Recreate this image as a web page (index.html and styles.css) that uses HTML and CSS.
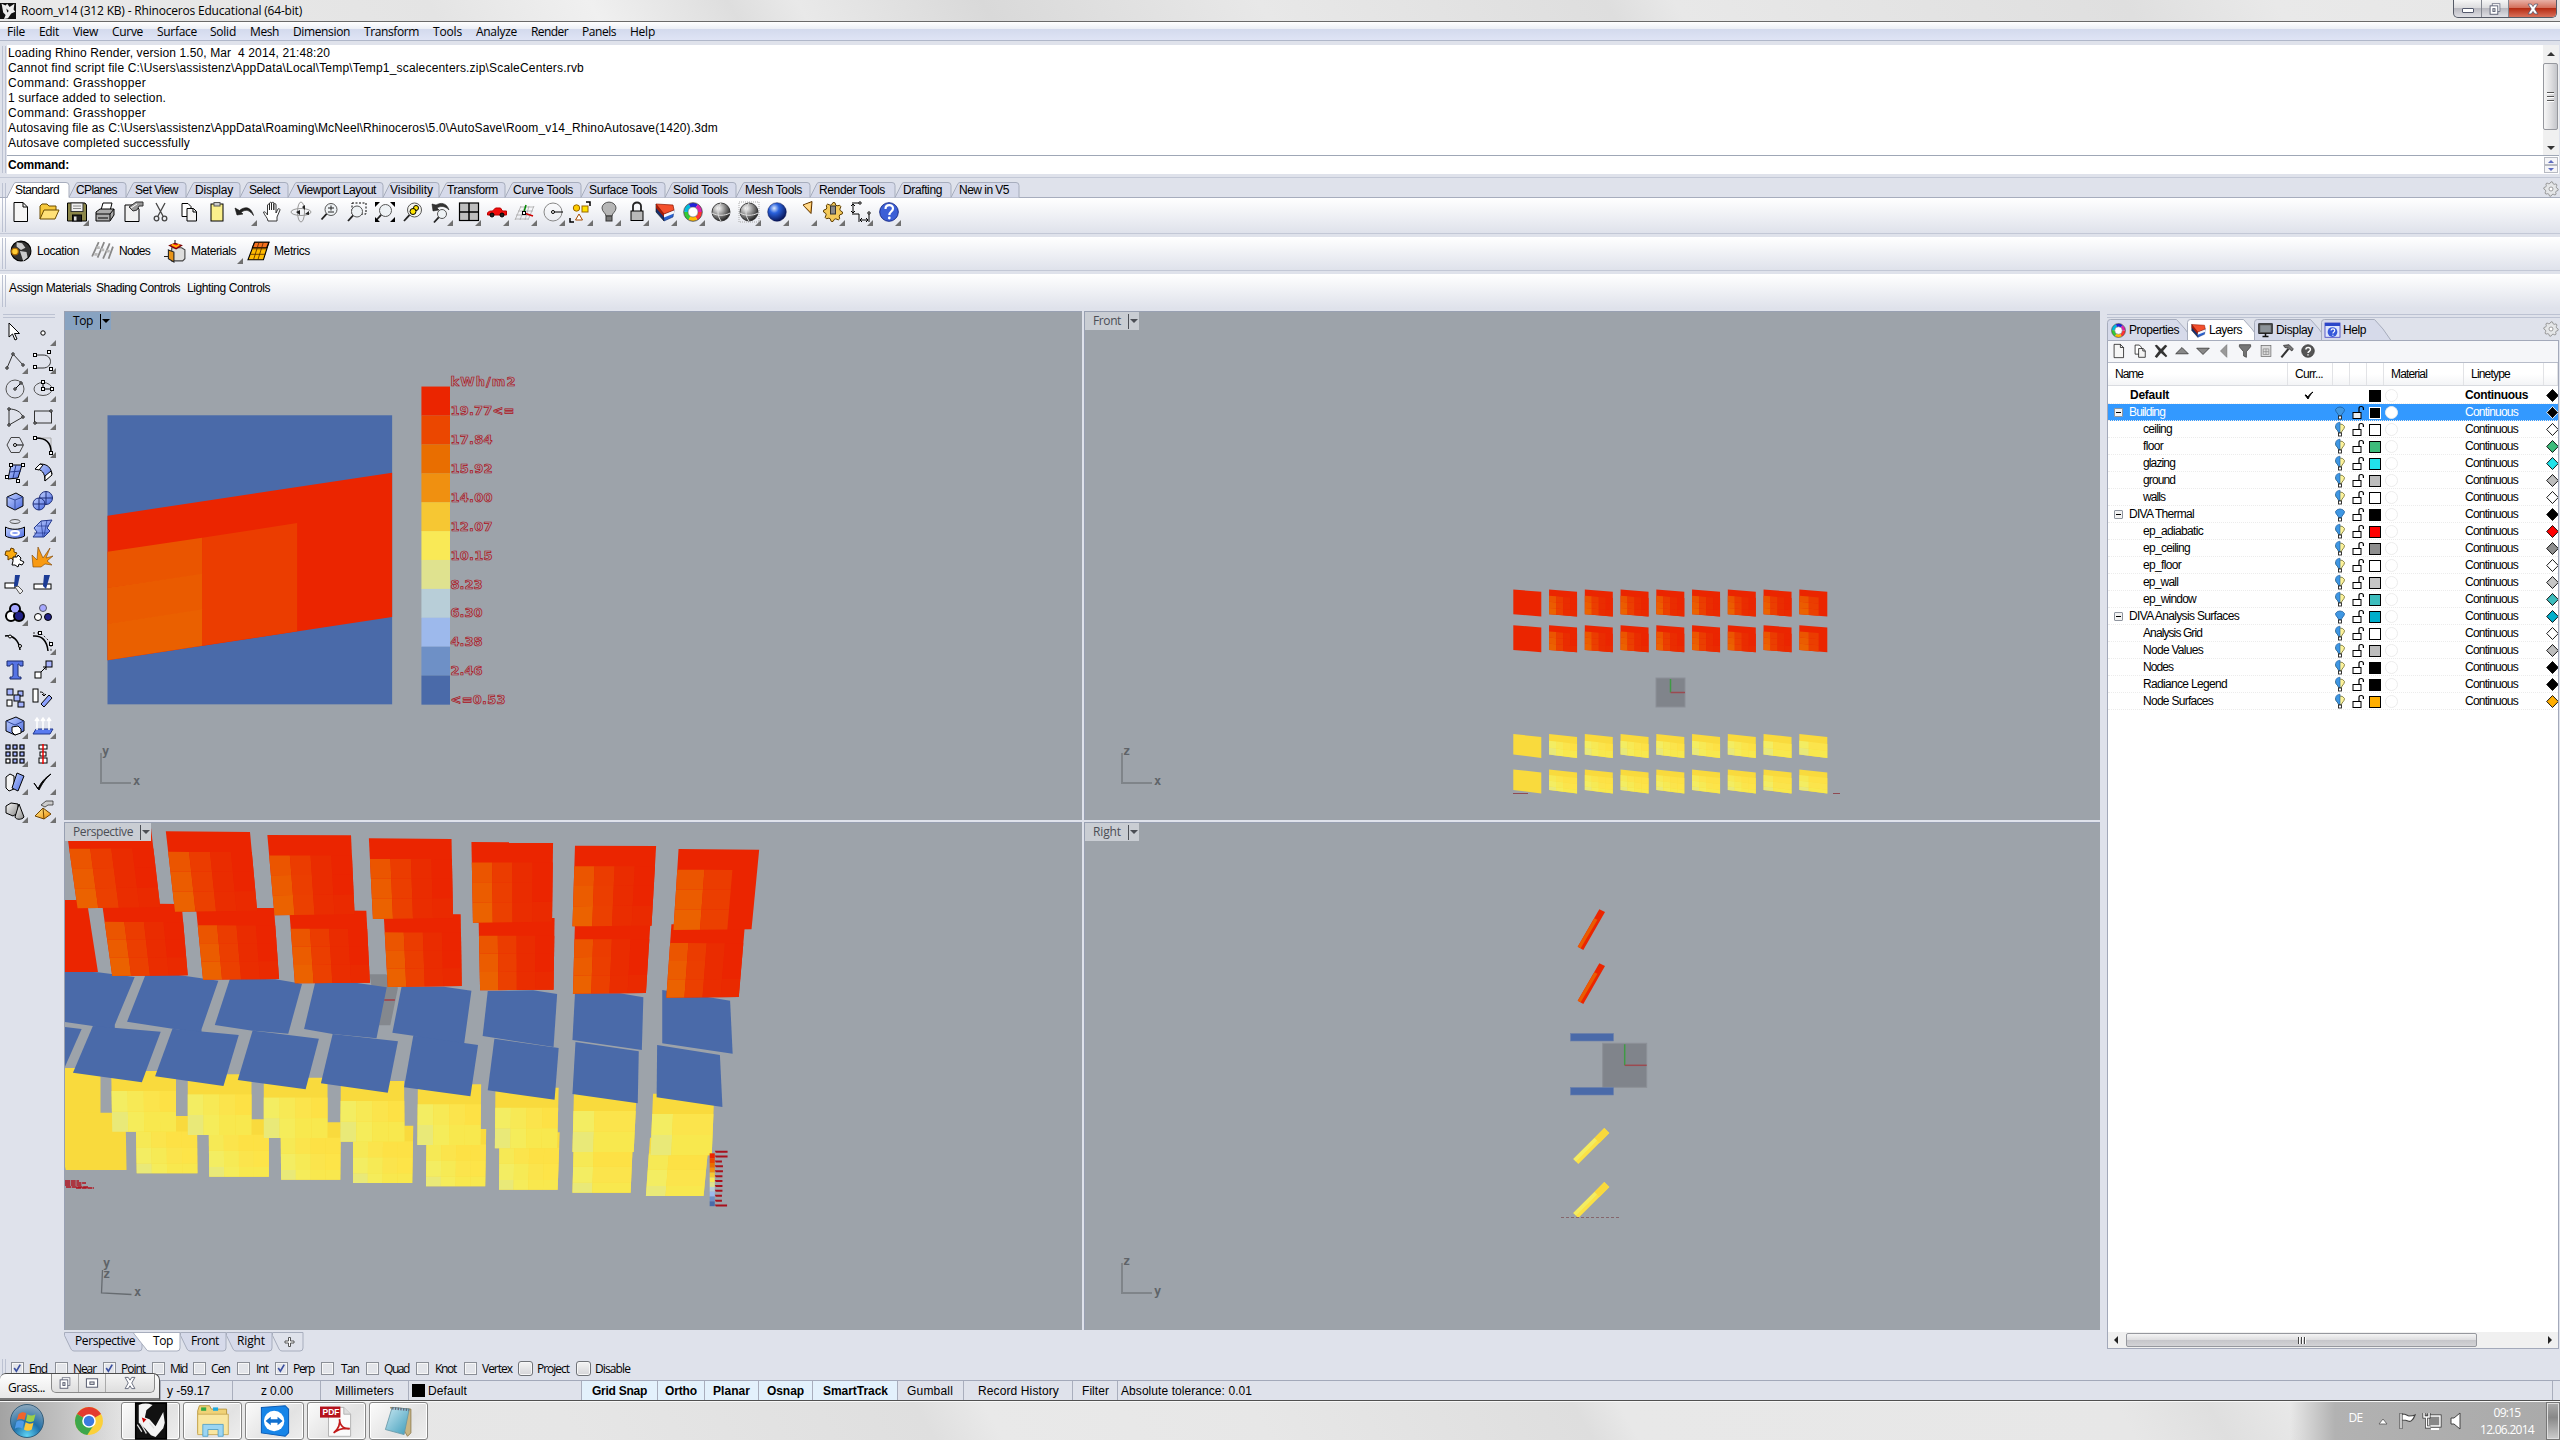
FILE: index.html
```html
<!DOCTYPE html>
<html lang="en">
<head>
<meta charset="utf-8">
<title>Room_v14 (312 KB) - Rhinoceros Educational (64-bit)</title>
<link rel="stylesheet" href="styles.css">
</head>
<body>
<svg class="defs" aria-hidden="true">
  <defs>
    <linearGradient id="blue" x1="0" y1="0" x2="1" y2="1"><stop offset="0" stop-color="#c3d2ff"/><stop offset="1" stop-color="#4a6ae0"/></linearGradient>
    <linearGradient id="gray" x1="0" y1="0" x2="1" y2="1"><stop offset="0" stop-color="#fafafa"/><stop offset="1" stop-color="#8a8a8a"/></linearGradient>
    <linearGradient id="gold" x1="0" y1="0" x2="1" y2="1"><stop offset="0" stop-color="#fff29a"/><stop offset="1" stop-color="#f08a00"/></linearGradient>
    <radialGradient id="ball" cx=".35" cy=".3" r=".75"><stop offset="0" stop-color="#fff"/><stop offset=".5" stop-color="#8c8c8c"/><stop offset="1" stop-color="#1c1c1c"/></radialGradient>
    <radialGradient id="blueball" cx=".35" cy=".3" r=".75"><stop offset="0" stop-color="#dbe9ff"/><stop offset=".35" stop-color="#2a62dd"/><stop offset="1" stop-color="#06104f"/></radialGradient>
    <radialGradient id="orb" cx=".5" cy=".95" r=".95"><stop offset="0" stop-color="#5fd4f5"/><stop offset=".45" stop-color="#1f6fa8"/><stop offset="1" stop-color="#8fa9bd"/></radialGradient>
    <linearGradient id="note" x1="0" y1="0" x2="1" y2="1"><stop offset="0" stop-color="#c9e8f2"/><stop offset="1" stop-color="#3d9cba"/></linearGradient>
  </defs>
</svg>

<header class="titlebar">
  <div class="caption"><span class="app-icon" data-icon="rhino"></span><span class="fit title" data-w="281">Room_v14 (312 KB) - Rhinoceros Educational (64-bit)</span></div>
  <div class="controls">
    <span class="ctl min"><i></i></span>
    <span class="ctl max" data-icon="restore"></span>
    <span class="ctl close" data-icon="close"></span>
  </div>
</header>
<nav class="menu strip" id="menu"></nav>

<section class="history">
  <div class="grip"></div>
  <div class="history-body">
    <div class="log">
      <div class="lines" id="log"></div>
      <div class="vscroll"><b class="up"></b><i class="vthumb"><u></u><u></u><u></u></i><b class="down"></b></div>
    </div>
    <div class="prompt"><span class="fit" data-w="61">Command:</span><div class="spin"><i><b class="up"></b></i><i><b class="down"></b></i></div></div>
  </div>
</section>

<section class="tabs-row"><div class="grip"></div><div class="tabs" id="tabs"></div><span class="gear" data-icon="cog"></span></section>
<section class="bar main-bar"><div class="grip"></div><div class="icons" id="toolbar"></div></section>
<section class="bar diva-bar"><div class="grip"></div><div class="strip" id="diva"></div></section>
<section class="bar links-bar"><div class="grip"></div><div class="strip" id="links"></div></section>

<main class="work">
  <aside class="palette"><div class="hgrip"></div><div class="palette-grid" id="palette"></div></aside>
  <div class="views">
    <section class="viewport"><svg class="scene" id="top" viewBox="64 311 1018 509"></svg><div class="vlabel active"><span class="fit" data-w="20">Top</span><i></i></div></section>
    <section class="viewport"><svg class="scene" id="front" viewBox="1084 311 1016 509"></svg><div class="vlabel"><span class="fit" data-w="28">Front</span><i></i></div></section>
    <section class="viewport"><svg class="scene" id="persp" viewBox="64 822 1018 508"></svg><div class="vlabel"><span class="fit" data-w="60">Perspective</span><i></i></div></section>
    <section class="viewport"><svg class="scene" id="right" viewBox="1084 822 1016 508"></svg><div class="vlabel"><span class="fit" data-w="28">Right</span><i></i></div></section>
  </div>
  <aside class="panel">
    <div class="hgrip"></div>
    <div class="panel-tabs"><div class="ptabs" id="ptabs"></div><span class="gear" data-icon="cog"></span></div>
    <div class="panel-box">
      <div class="panel-tools" id="ptools"></div>
      <div class="cols head"><span class="fit" data-w="28">Name</span><span class="fit" data-w="28">Curr...</span><span></span><span></span><span></span><span class="fit" data-w="36">Material</span><span class="fit" data-w="39">Linetype</span><span></span></div>
      <div class="rows" id="layers"></div>
      <div class="hscroll"><b class="left"></b><i class="hthumb"><u></u><u></u><u></u></i><b class="rightarr"></b></div>
    </div>
  </aside>
</main>

<section class="view-tabs" id="vtabs"></section>
<section class="osnap"><div class="grip"></div><div class="strip" id="osnap"></div></section>
<footer class="status strip" id="status"></footer>
<footer class="taskbar">
  <div class="tasks" id="tasks"></div>
  <div class="tray">
    <span class="fit lang" data-w="14">DE</span>
    <span class="tray-icon" data-icon="trayup"></span><span class="tray-icon" data-icon="flag"></span><span class="tray-icon" data-icon="net"></span><span class="tray-icon" data-icon="vol"></span>
    <div class="clock"><span class="fit" data-w="27">09:15</span><span class="fit" data-w="54">12.06.2014</span></div>
    <div class="desk"></div>
  </div>
</footer>
<div class="grass"><span class="fit" data-w="37">Grass...</span><div class="gbtns"><span data-icon="restore"></span><span data-icon="maxi"></span><span data-icon="closeline"></span></div></div>
<script src="app.js"></script>
</body>
</html>
```
FILE: styles.css
```css
* { box-sizing: border-box; }
body { margin: 0; width: 2560px; height: 1440px; overflow: hidden; position: relative; display: flex; flex-direction: column; background: #dfe2eb; color: #000; font: 12px "Liberation Sans", Arial, sans-serif; }
body > * { flex-shrink: 0; }
.defs { position: absolute; width: 0; height: 0; }
svg { display: block; overflow: visible; }
.fit { white-space: pre; display: inline-block; }
.strip { display: flex; align-items: center; }
.cell { flex: none; display: flex; align-items: center; white-space: pre; }
i, b, u { font-style: normal; text-decoration: none; display: block; }

.titlebar { height: 22px; display: flex; justify-content: space-between; border-bottom: 1px solid #6a6a6a; background: linear-gradient(60deg, #eaeaea 0, #e4e4e4 380px, #f0f0f0 520px, #dedede 640px, #e9e9e9 700px, #d9d9d9 860px, #e8e8e8 1100px, #dedede 1400px, #e8e8e8 1460px, #dfdfdf 1850px, #e9e9e9 1980px, #e6e6e6 100%); }
.caption { display: flex; align-items: center; gap: 5px; }
.app-icon { width: 16px; height: 16px; background: #000; }
.app-icon svg { width: 16px; height: 16px; }
.title, .menu, .vlabel, .tray { font-family: "Open Sans", "Noto Sans", sans-serif; }
.title { line-height: 21px; }
.controls { display: flex; height: 18px; margin-right: 3px; border: 1px solid #555a66; border-top: 0; border-radius: 0 0 5px 5px; overflow: hidden; background: linear-gradient(#f6f6f6, #dcdcde 45%, #b9b9c0 50%, #dfdfe4); }
.ctl { display: flex; align-items: center; justify-content: center; width: 28px; border-right: 1px solid #83868f; }
.ctl.max { width: 27px; }
.ctl.close { width: 47px; border: 0; background: linear-gradient(#e8b0a6, #d4705c 45%, #b62c14 50%, #d9705a); }
.ctl svg { width: 14px; height: 14px; }
.ctl.min i { width: 12px; height: 5px; margin-top: 4px; border: 1px solid #555a6e; background: #fff; border-radius: 1px; }
.menu { height: 19px; padding-top: 1px; border-bottom: 1px solid #b0b7c9; background: linear-gradient(#fff, #eceff6 7px, #d3daed 7px, #dfe4f5); }

.grip { flex: none; width: 4px; margin: 1px 1px 1px 2px; border: solid #bcc2d2; border-width: 0 1px; }
.history { height: 137px; padding: 4px 0 3px; display: flex; border-bottom: 1px solid #c3c8d6; }
.history-body { flex: 1; margin-right: 1px; height: 129px; background: #fff; display: flex; flex-direction: column; }
.log { height: 111px; display: flex; justify-content: space-between; border-bottom: 1px solid #9fa7b6; }
.lines { padding: 1px 0 0 1px; line-height: 15px; }
.lines div { height: 15px; }
.vscroll { width: 16px; padding-right: 1px; background: #f0f0f0; display: flex; flex-direction: column; align-items: center; }
.up, .down { width: 0; height: 0; border: 4px solid transparent; }
.up { border-bottom-color: #333; border-top: 0; }
.down { border-top-color: #333; border-bottom: 0; }
.vscroll .up { margin: 7px 0; }
.vthumb { width: 15px; height: 67px; border: 1px solid #96989e; border-radius: 2px; background: linear-gradient(90deg, #f6f6f6, #e0e0e2 50%, #c4c5ca); display: flex; flex-direction: column; justify-content: center; align-items: center; gap: 2px; }
.vthumb u { width: 7px; height: 2px; background: #555; border-bottom: 1px solid #fff; }
.vscroll .down { margin-top: 16px; }
.prompt { height: 18px; padding: 0 1px; display: flex; justify-content: space-between; font-weight: bold; align-items: center; }
.prompt .fit { padding-bottom: 1px; }
.spin { width: 14px; height: 16px; border: 1px solid #b7bac2; background: #b7bac2; display: flex; flex-direction: column; gap: 2px; }
.spin i { flex: 1; background: #f5f5f7; display: flex; align-items: center; justify-content: center; }
.spin b { border-width: 3px; }
.spin .up { border-bottom-color: #5d6cc0; }
.spin .down { border-top-color: #5d6cc0; }

.tabs-row { height: 20px; padding-top: 4px; display: flex; border-bottom: 1px solid #a7adbd; position: relative; }
.tabs { flex: 1; display: flex; margin-bottom: -1px; }
.tab { flex: none; position: relative; height: 17px; display: flex; align-items: center; }
.tab svg { position: absolute; left: 0; top: 0; }
.tab span { position: relative; }
.tabs .tab { padding-bottom: 2px; }
.gear { width: 16px; height: 16px; margin: -1px 1px 0 0; }
.gear svg { width: 16px; height: 16px; }
.bar { display: flex; background: linear-gradient(#fff, #f4f5f8 35%, #dfe2eb); border-bottom: 1px solid #c3c8d6; }
.main-bar { height: 36px; }
.main-bar .grip { margin-top: -14px; }
.icons { display: flex; height: 28px; }
.tool { position: relative; width: 28px; height: 28px; display: flex; align-items: center; justify-content: center; }
.tool svg, .palette svg { width: 20px; height: 20px; }
.fly::after { content: ""; position: absolute; right: 2px; bottom: 0; border: 3px solid #707070; border-top-color: transparent; border-left-color: transparent; }
.diva-bar { height: 37px; border-top: 3px solid #dfe2eb; }
.links-bar { height: 37px; border-top: 3px solid #dfe2eb; border-bottom: 0; }
.diva-bar .strip { padding-bottom: 6px; }
.diva-bar svg { width: 22px; height: 22px; }
.diva-bar .cell { position: relative; height: 26px; }
.diva-bar .fly::after { right: 5px; bottom: 0; }
.links-bar .strip { padding-bottom: 7px; }

.work { height: 1018px; margin-top: 3px; display: flex; }
.palette { width: 64px; padding-top: 3px; }
.hgrip { height: 4px; border: solid #bcc2d2; border-width: 1px 0; margin-left: 3px; margin-right: 9px; }
.palette-grid { display: grid; grid-template-columns: 28px 28px; grid-auto-rows: 28.05px; margin-top: 1px; }
.palette-grid .tool { height: 28px; width: 29px; }
.palette-grid .fly::after { right: 1px; bottom: 1px; }
.views { width: 2036px; display: grid; grid-template-columns: 1018px 1016px; grid-template-rows: 509px 508px; gap: 2px; }
.viewport { position: relative; background: #9da3aa; border: solid #98a0b2; border-width: 1px 0 0 1px; overflow: hidden; }
.scene { margin: -1px 0 0 -1px; width: calc(100% + 1px); height: calc(100% + 1px); }
.ax { font: bold 12px "DejaVu Sans Mono", monospace; fill: #5f6368; }
.lg { font: bold 13px "DejaVu Sans", sans-serif; fill: #a59ba2; stroke: #ab101a; stroke-width: .7; }
.pdf { font: bold 5px "Liberation Sans", sans-serif; fill: #fff; }
.vlabel { position: absolute; left: 0; top: 0; height: 18px; display: flex; align-items: center; padding-left: 8px; background: #c9cdd3; color: #4b4e55; }
.vlabel .fit { padding-bottom: 2px; }
.vlabel.active { background: #88a3c1; color: #000; }
.vlabel i { margin-left: 7px; height: 15px; border-left: 1px solid currentColor; width: 11px; position: relative; }
.vlabel i::after { content: ""; position: absolute; left: 1px; top: 5px; border: 4px solid transparent; border-top-color: currentColor; border-bottom: 0; }

.panel { width: 453px; margin-left: 7px; padding-top: 3px; }
.panel .hgrip { margin: 0; }
.panel-tabs { height: 22px; display: flex; justify-content: space-between; align-items: center; }
.ptabs { display: flex; padding-top: 1px; align-self: stretch; }
.ptab { position: relative; height: 22px; display: flex; align-items: center; gap: 3px; padding-left: 4px; }
.ptab > svg { position: absolute; left: 0; top: 0; }
.ptab > span { position: relative; }
.pic svg { width: 15px; height: 15px; }
.panel-box { width: 452px; height: 1009px; border: 1px solid #a3a9ba; background: #fff; display: flex; flex-direction: column; }
.panel-tools { height: 22px; padding-bottom: 1px; background: #f5f6f9; border-bottom: 1px solid #b7bcc9; display: flex; align-items: center; }
.panel-tools span { width: 21px; display: flex; justify-content: center; }
.panel-tools svg { width: 14px; height: 14px; }
.cols { display: grid; grid-template-columns: 180px 45px 17px 17px 17px 80px 80px 1fr; align-items: center; height: 17px; }
.cols > * { overflow: hidden; }
.head { height: 23px; margin-bottom: 1px; background: linear-gradient(#fff 50%, #f3f4f6); border-bottom: 1px solid #d9dbe0; }
.head > span { padding-left: 7px; border-right: 1px solid #e2e3e6; line-height: 23px; height: 22px; }
.rows { flex: 1; }
.layer { border-bottom: 1px dotted #ececec; }
.layer.sel { background: #3399ff; color: #fff; }
.layer.bold { font-weight: bold; }
.layer .name { display: flex; align-items: center; height: 17px; }
.layer .exp { width: 9px; height: 9px; margin: 0 6px 0 6px; border: 1px solid #8f959f; border-radius: 1px; background: #f3f3f3; position: relative; }
.layer .exp::after { content: ""; position: absolute; left: 1px; top: 3px; width: 5px; height: 1px; background: #000; }
.layer svg { width: 17px; height: 17px; }
.sw { width: 12px; height: 12px; margin-left: 2px; border: 1px solid #000; }
.sel .sw { border-color: #fff; }
.mat { width: 13px; height: 13px; margin-left: 1px; border: 1px solid #ececec; border-radius: 50%; }
.sel .mat { background: #fff; }
.ltype { padding-left: 1px; }
.layer .name, .layer .ltype { line-height: 17px; }
.hscroll { height: 16px; background: #f0f0f0; display: flex; align-items: center; padding: 0 6px; }
.hthumb { width: 351px; height: 14px; border: 1px solid #96989e; border-radius: 2px; background: linear-gradient(#f4f4f4, #dedee0 48%, #c6c6ca 52%, #d3d3d6); display: flex; justify-content: center; align-items: center; gap: 1px; margin-left: 8px; margin-right: auto; }
.hthumb u { width: 2px; height: 7px; background: #444; border-right: 1px solid #fff; }
.left, .rightarr { width: 0; height: 0; border: 4px solid transparent; }
.left { border-right-color: #222; border-left: 0; }
.rightarr { border-left-color: #222; border-right: 0; }

.view-tabs { height: 21px; padding: 1px 0 0 64px; margin-top: 2px; display: flex; font-family: "Open Sans", "Noto Sans", sans-serif; }
.osnap { height: 28px; padding-top: 3px; display: flex; font-family: "Open Sans", "Noto Sans", sans-serif; }
.osnap .grip { margin: 4px 1px 4px 2px; }
.check { width: 13px; height: 13px; border: 1px solid #8b8f97; background: #e3e5ea; box-shadow: inset 0 0 0 1px #f7f7f7; }
.check.btn { width: 15px; height: 15px; border-radius: 3px; background: linear-gradient(#f4f4f4, #d5d5d8); border-color: #6f7277; }
.check svg { width: 11px; height: 11px; }
.osnap .strip { padding-top: 1px; }
.status { height: 21px; border-top: 1px solid #a3a9ba; border-bottom: 1px solid #505050; font-size: 12px; }
.status .cell { height: 19px; border-left: 1px solid #a9aebd; }
.status .on { background: #e3f1fc; font-weight: bold; }
.status .swatch { width: 13px; height: 13px; background: #000; margin: 0 3px 0 3px; }
.taskbar { height: 39px; display: flex; justify-content: space-between; border-top: 1px solid #f7f7f7; background: linear-gradient(90deg, #a3a3a3 0, #c0c0c0 60px, transparent 130px, transparent 2290px, #b2b2b2 2335px, #aaa 2545px), linear-gradient(60deg, #e8e8e8 0, #e6e6e6 500px, #dfdfdf 810px, #e9e9e9 870px, #e7e7e7 1100px, #dedede 1380px, #e8e8e8 1420px, #e7e7e7 1850px, #dfdfdf 1930px, #e8e8e8 2000px); }
.tasks { display: flex; }
.task { width: 59px; height: 38px; margin-right: 3px; display: flex; align-items: center; justify-content: center; border: 1px solid #858585; border-radius: 3px; background: linear-gradient(135deg, #fbfbfb, #e2e2e2 60%, #eee); box-shadow: inset 0 0 0 1px #fff; }
.task.plain { border-color: transparent; background: none; box-shadow: none; }
.task:first-child { width: 54px; margin-right: 5px; }
.task svg { width: 34px; height: 34px; }
.tray { display: flex; color: #fff; font-size: 12px; }
.tray .lang { width: 25px; margin: 7px 0 0 -2px; }
.tray-icon { width: 24.4px; padding-top: 9px; }
.tray-icon svg { width: 20px; height: 20px; }
.clock { width: 75px; display: flex; flex-direction: column; align-items: center; line-height: 17px; padding: 2px 3px 0 0; }
.desk { width: 14px; height: 38px; border: 1px solid #777; background: linear-gradient(#aaa, #888 40%, #ccc); box-shadow: inset 0 0 0 1px #ddd; }
.grass { position: absolute; left: 0; top: 1373px; width: 160px; height: 27px; display: flex; border: 1px solid #4c4c4c; border-bottom: 2px solid #777; border-left: 0; border-radius: 6px 7px 0 0; background: linear-gradient(#fdfdfd, #e8e8e8); font-family: "Open Sans", "Noto Sans", sans-serif; padding-left: 8px; align-items: center; }
.grass > .fit { padding-top: 2px; }
.gbtns { align-self: flex-start; height: 19px; display: flex; width: 104px; margin-left: 6px; border: 1px solid #8a8a8a; border-top: 0; border-radius: 0 0 5px 5px; background: linear-gradient(#f4f4f4, #dedede); }
.gbtns span { width: 27px; display: flex; align-items: center; justify-content: center; border-right: 1px solid #aaa; }
.gbtns span:last-child { flex: 1; border: 0; }
.gbtns svg { width: 14px; height: 14px; }
```
FILE: app.js
```js
const S = (body, box = '0 0 20 20') => `<svg viewBox="${box}">${body}</svg>`;
const p = (d, f = 'none', s = '#000', w = 1) => `<path d="${d}" fill="${f}" stroke="${s}" stroke-width="${w}"/>`;
const c = (x, y, r, f = 'none', s = '#000', w = 1) => `<circle cx="${x}" cy="${y}" r="${r}" fill="${f}" stroke="${s}" stroke-width="${w}"/>`;
const r = (x, y, w, h, f = '#fff', s = '#000', k = 1) => `<rect x="${x}" y="${y}" width="${w}" height="${h}" fill="${f}" stroke="${s}" stroke-width="${k}"/>`;
const hd = (...pts) => pts.map(q => r(q[0] - 1.5, q[1] - 1.5, 3, 3)).join('');
const lens = (x, y, q, f = '#eef2f5') => p(`M${x - q * .7} ${y + q * .7}L${x - q - 3.5} ${y + q + 4}`, 'none', '#222', 1.8) + c(x, y, q, f, '#555');
const wheel = ['#f33', '#fb0', '#3c3', '#0bd', '#22d', '#d2a'].map((k, i) => `<circle cx="10" cy="10" r="7" fill="none" stroke="${k}" stroke-width="4" stroke-dasharray="7.4 36.6" stroke-dashoffset="${-i * 7.33}"/>`).join('') + c(10, 10, 9.3, 'none', '#222', .7) + c(10, 10, 5, '#fff', '#555', .6);
const layersIcon = p('M1 2l8 10v7l-8-9z', '#16306f', '#111', .6) + p('M9 12l10-4-1 7-9 4z', '#2a62d0', '#16306f', .6) + p('M9 12l10-4v3.500l-10 4z', '#f4f6fc', 'none') + p('M1 2l17 1 1 5-10 4z', '#f4502c', '#8d1600', .7) + p('M1 2l8 10v3l-8-9z', '#a81c06', 'none');
const sphere = c(10, 10, 9, 'url(#ball)', '#222', .8) + p('M10 1c-4 5-4 13 0 18M1 11c5 3 13 3 18 0', 'none', '#ddd');
const cog = (x, y, R, f, s) => { let d = ''; for (let i = 0; i < 32; i++) { const a = i * Math.PI / 16, q = i % 4 < 2 ? R : R * .78; d += (i ? 'L' : 'M') + (x + q * Math.cos(a)).toFixed(1) + ' ' + (y + q * Math.sin(a)).toFixed(1); } return p(d + 'z', f, s); };
const cube = p('M2 6l9-4 7 4v9l-8 4-8-4z', 'url(#blue)') + p('M2 6l8 3 8-3M10 9v10', 'none', '#334a9c');

const I = {
  rhino: p('M0 0h20v20h-20z', '#111', 'none') + p('M2 1l5 2 2-2 3 4 6-4-1 7 2 3-5 2-4 6-5 1 2-5-3-3z', '#eee', 'none') + p('M8 7l3 3-2 2z', '#111', 'none'),
  restore: r(6, 2.5, 11, 11, '#fff', '#555a6e') + r(3, 5.5, 11, 12, '#fff', '#555a6e', 1.3) + r(7, 9.5, 3, 4, '#ddd', '#555a6e', 1.3),
  maxi: r(2, 4, 16, 12, '#fff', '#555a6e', 1.4) + r(7, 8.5, 6, 3.5, '#ddd', '#555a6e', 1.4),
  close: p('M3 3h4.500l2.500 3.500 2.500-3.500h4.500l-4.500 7 4.500 7h-4.500l-2.500-3.500-2.500 3.500h-4.500l4.500-7z', '#fff', '#444a66'),
  closeline: p('M3 2h4.500l2.500 4 2.500-4h4.500l-4.500 8 4.500 8h-4.500l-2.500-4-2.500 4h-4.500l4.500-8z', '#fff', '#555a6e', 1.2),
  cog: cog(10, 10, 9, '#e4e6e8', '#888') + c(10, 10, 2.5, '#fff', '#888'),
  neu: p('M3 .5h9l4.500 4.500v14.500h-13.500z', '#f6f6f6') + p('M12 .5v4.500h4.500'),
  open: p('M1 17v-13l2-2h5l2 2h7v4', '#f7c93c', '#6b4b00') + p('M1 17l4-9h15l-4 9z', '#ffe178', '#6b4b00'),
  save: p('M.5 1h17.500l1.500 2v16h-19z', '#8b8649') + r(4, 1, 12, 8.5, '#efefef', '#333') + p('M6 4h8M6 6.500h8', 'none', '#888') + r(5.5, 13, 9, 6, '#222') + r(7, 14.5, 2.5, 4, '#ddd', 'none'),
  print: p('M6 8l2-7h9l-2 8', '#fff') + p('M1 10l4-3h14v6l-4 6h-14z', '#aaa') + p('M1 12h14l4-5M3 16h10', 'none') + p('M15 12v6'),
  props: p('M2 3h10l4 4v12.500h-14z', '#f1f1f1') + p('M6 5l7-5h7v4l-4 0-2 4-4 1z', '#999', '#333') + p('M8 6l6-4', 'none', '#fff'),
  cut: p('M5 1l7 13M14 1l-7 13', 'none', '#444', 1.3) + c(5.5, 16.5, 2.3, 'none', '#444', 1.3) + c(13.5, 16.5, 2.3, 'none', '#444', 1.3),
  copy: p('M3 1.500h6l3 3v10h-9z', '#fff') + p('M8 6.500h6.500l3 3v9.500h-9.500z', '#f4f4f4') + p('M14 6.500v3.500h3.500'),
  paste: r(4, 2, 12, 17, '#fbf08c') + r(7, .5, 6, 3.5, '#ccc', '#555'),
  undo: p('M0 6l2 7 6-1-2-1.500c5-4 9-2 12.500 3-2-8-8-10-14-5z', '#222', '#111', .6),
  pan: p('M5 19c0-3-4-6-4.500-9 2-1 3 2 4 3v-10c1-1.500 2-1 2 0v5-7c1-1 2-1 2 0v7-7c1-1 2.300-1 2.300 0v7-6c1-1 2.200-.5 2.200 1v8l2-4c1-1 2 0 2 1l-3 7v4z', '#fff', '#222', .9),
  rotate: '<ellipse cx="10" cy="10" rx="10" ry="3.500" fill="none" stroke="#999"/><ellipse cx="10" cy="10" rx="3.500" ry="10" fill="none" stroke="#999"/>' + p('M5 10l4-2v5zM18 9l-4 3 4 1zM11 5l3-2v5z', '#222', 'none'),
  zoom: lens(12, 7.5, 6) + p('M9 6h6M12 3.500v5M9 10h6', 'none', '#222'),
  zoomw: '<rect x="5" y="1" width="14" height="11" fill="none" stroke="#000" stroke-dasharray="2 1.500"/>' + lens(10, 9.5, 5.5),
  zoome: lens(10.5, 8.5, 6) + p('M0 0h5l-5 5zM20 0v5l-5-5zM20 20v-5l-5 5zM0 20v-5l5 5z', '#000', 'none'),
  zooms: lens(11.5, 8, 7, '#f4f4ee') + c(13, 6, 2.5, '#ffe400') + c(10, 9.5, 3, '#ffe400'),
  unview: lens(11, 12, 4.5) + p('M1 2l1 7 6-1-2-2c5-3 9-1 12 2-2-7-8-8-13-5z', '#333', '#111', .5),
  four: r(.5, 1, 19, 17.5, '#bdbdbd', '#000', 1.2) + p('M10 1v17.500M.5 10h19', 'none', '#000', 1.5),
  car: p('M.5 12c0-3 3-3 5-3l3-3h5l2 3h4v4h-19z', '#f20d0d', '#b00') + c(5, 13, 2, '#222') + c(15, 13, 2, '#222'),
  cplane: p('M5 5h14M3 9h15M1 13h14M0 17h13M6 4l-6 14M10 4l-5 14M14 4l-4 14M19 4l-6 14', 'none', '#aaa', .8) + p('M9 10l2-7', 'none', '#080', 1.5) + p('M9 11l9 3', 'none', '#c00', 1.5) + hd([9, 11]),
  circ: c(10, 10, 9, 'none', '#888') + p('M10 10h10') + c(10, 10, 1.5, '#fff'),
  snap: c(5.5, 6, 3.2, '#ffcd00', '#996600') + r(11, 4, 6, 6, '#ffe100', '#996600') + p('M8 12l3.500 6h-7z', '#fff', '#a64b00') + p('M15 0h4v4M-1 16v4h4', 'none', '#000', 1.5),
  bulb: p('M7 14c0-3-4-4-4-8a6.500 5.500 0 0 1 14 0c0 4-4 5-4 8z', '#b6b6b6', '#555') + r(7, 14, 6, 5, '#777', '#333'),
  lock: p('M6 9v-5a4 3.500 0 0 1 8 0v5', 'none', '#222', 1.8) + r(4, 9, 12, 9.5, '#b9b9b9'),
  layers: layersIcon, wheel, sphere,
  render: '<rect x="0" y="0" width="20" height="20" fill="none" stroke="#aaa" stroke-dasharray="1 1"/>' + sphere,
  blueball: c(10, 10, 9.3, 'url(#blueball)', '#061050', .5),
  spot: p('M8 3l9-3.500-1 12z', '#f9b641', '#5a3200') + p('M8.500 3.200l7.500-2.500-1 8', '#ffd98c', 'none'),
  gears: cog(10, 10, 9.5, '#f3c95a', '#5d3d00') + r(7.5, 4, 5, 8, '#888', '#333'),
  dims: p('M1 1h9M2 3v7M0 4l2-2 2 2M0 9l2 2 2-2M1 12h7v8M18 11v9M9 18h8M11 16l-2 2 2 2M15 16l2 2-2 2') + c(9, 1, 1.2, '#fff') + c(18, 11, 1.2, '#fff'),
  help: c(10, 10, 9.3, '#3c5fd6', '#1c2f8c') + p('M6.500 7c0-5 7.500-5 7.500-.5 0 3-3.700 3-3.700 6.500', 'none', '#fff', 2.2) + c(10.3, 16, 1.4, '#fff', 'none'),
  globe: c(10, 10, 9, '#333') + p('M6 2l5 1 3 4-4 2-4-3zM9 10l6 1 1 5-4 3z', '#ccc', 'none') + c(4.5, 10.5, 3, '#fc3', '#a60'),
  nodes: p('M7 2l-6 13M12 2l-6 14M17 3l-6 14M20 6l-4 11', 'none', '#888', 1.6) + p('M5 7h3M9 9h3M14 10h3M3 13h3', 'none', '#bbb', 2.5),
  mats: p('M7 7h9l3 2v8l-2 2h-10z', '#ddd', '#444') + p('M5 5l5-2 6 2-5 3z', '#f22', '#700') + p('M7 4l4 2 3-2', 'none', '#fb0', 1.5) + p('M10 0v3M0 15h4M4 9l5 2v9l-5-3z', '#e79418', '#222'),
  metrics: p('M6 2h13l-5 16h-14z', '#fb0') + p('M6 2h13l-2 5h-13z', '#f4701e') + p('M10 2l-5 16M14 2l-5 16M4 8h13M2 13h14', 'none', '#4a2000', .7),
  // side palette
  arrow: p('M4 0v14l3.500-3 2.500 6 2-1-2.500-5.500h5z', '#fff'),
  point: c(10, 10, 2.2, '#fff'),
  poly: p('M2 17l6-14 10 11', 'none', '#333') + c(2, 17, 1.2, '#fff') + c(8, 3, 1.2, '#fff') + c(18, 14, 1.2, '#fff'),
  curve: p('M2 4h8c10 0 10 13 0 13h-8', 'none', '#333') + hd([2, 4], [16, 1], [2, 16], [18, 18]),
  circle: c(10, 10, 9, 'none', '#555') + p('M10 10l6-6') + c(10, 10, 1.2, '#fff') + c(16, 4, 1.2, '#fff'),
  ell: '<ellipse cx="10" cy="10" rx="9" ry="6.500" fill="none" stroke="#555"/>' + p('M10 10v-6M10 10h8') + hd([10, 3], [10, 10], [19, 10]),
  arc: p('M4 2c7 0 12 3 14 8l-14 8z', 'none', '#333') + c(4, 2, 1.2, '#fff') + c(18, 10, 1.2, '#fff') + c(4, 18, 1.2, '#fff'),
  rect: r(1.5, 4, 17, 12, 'none', '#333') + c(18, 4, 1.2, '#fff') + c(2, 16, 1.2, '#fff'),
  hex: p('M6 2.500h8.500l4 7.500-4 7.500h-8.500l-4-7.500z', 'none', '#444') + p('M10 10h8') + c(10, 10, 1.5, '#fff'),
  fillet: p('M3 3h15v15', 'none', '#aaa') + p('M3 3c10 0 15 4 15 14', 'none', '#000', 1.5) + hd([2, 3], [18, 18]),
  srf: p('M6 2h11l-4 13-10 1z', 'url(#blue)') + p('M11 2l-3 13M4 9l12-1', 'none', '#23388c') + hd([6, 2], [18, 2], [2, 14], [13, 18]),
  bend: p('M2 6l5-5c8 0 11 4 12 10l-7 7c0-8-3-12-10-12z', 'url(#blue)') + p('M2 6l5-5 3 1-4 5zM12 13l6-5 1 4-7 6z', '#fff'),
  cube,
  balls: c(13, 7, 6.5, 'url(#blue)', '#1d2c77') + p('M13 .5v13M6.500 7h13', 'none', '#1d2c77') + c(6, 13, 6, 'url(#blue)', '#1d2c77') + p('M6 7v12M0 13h12', 'none', '#1d2c77'),
  cyl: '<ellipse cx="10" cy="2.500" rx="5" ry="2" fill="none" stroke="#555"/>' + p('M.5 8c5 3 14 3 19 0v9c-5 3-14 3-19 0z', 'url(#blue)') + '<ellipse cx="10" cy="14" rx="4" ry="2" fill="#8aa0f5" stroke="#fff" stroke-width="2"/>',
  mesh: p('M1 9l7-7 11-1-5 8 3 3-6 6h-11l4-5z', 'url(#blue)', '#23388c') + p('M8 2l2 16M14 1l-3 16M1 14h14M4 7h12', 'none', '#23388c', .7),
  puzzle: p('M1 4l4 0 1-3 3 1 0 3 3 1-2 3 2 3-4 1-2-2-3 2 0-4-3-1z', '#fbab10', '#643c00') + p('M8 10l4 0 1-2 3 3-1 2 4 2-2 3-3-1-1 3-3-2-3 0 1-4z', '#fff'),
  burst: p('M0 20l-1-12 5 5 1-13 5 11 7-10-4 10 7-2-6 5 5 4-7-1-4 3z', '#f89a12', '#7b4200', .6),
  trim: r(0, 8, 10, 5, '#fff') + p('M10 0h5l-3 14-3-3z', '#1c3c96', 'none') + p('M10 12l5 7 3-3-5-5z', '#eee', '#555'),
  split: r(1, 9, 17, 5, '#fff') + p('M11 0h6l-4 14-3-3z', '#1c3c96', 'none'),
  group: c(10, 6, 5, '#a6a8ff', '#000', 2) + c(6, 13, 5, '#fff', '#000', 2) + c(14, 13, 5, '#222288', '#000', 2) + c(10, 6, 3.5, '#a6a8ff', 'none'),
  ungroup: c(10, 5, 3.5, '#a6a8ff', '#556') + c(5, 14, 3.5, '#fff') + c(15, 14, 3.5, '#222288'),
  ctrl: p('M0 4c8-1 14 4 15 14', 'none', '#000', 1.5) + c(5, 4.5, 1.5, '#fff') + c(15, 14, 1.5, '#fff'),
  ctrl2: p('M0 4c9-1 14 5 15 15', 'none', '#000', 1.5) + p('M0 1h8l10 10v8', 'none', '#333').replace('/>', ' stroke-dasharray="2 2"/>') + hd([7, 1], [18, 12]),
  text: p('M2 1h16v5h-3c0-1-1-2-2-2v11c0 2 1 2 3 2v2h-11v-2c2 0 3 0 3-2v-11c-2 0-3 1-3 2h-3z', '#5674e4', '#1b2b6c'),
  move: r(2, 12, 6, 6, '#fff') + r(13, 1, 6, 6, '#aab5ff') + p('M8 12l5-5M10 7h3v3'),
  scatter: r(2, 1, 6, 6, '#a5b4ff') + r(13, 3, 5, 5, '#a5b4ff') + r(9, 7, 6, 6, '#a5b4ff') + r(2, 12, 5, 6, '#fff') + r(13, 14, 6, 5, '#a5b4ff'),
  orient: r(0, 1, 5, 13, '#fff') + p('M7 4c4 0 4 2 4 4M9 6l2 2 2-2') + p('M8 16l8-9 3 3-8 9z', '#8da2ff'),
  bool: p('M1 5l10-4 8 4v10l-9 4-9-4z', 'url(#blue)') + p('M1 5l9 4 9-4', 'none', '#334a9c') + p('M7 11l6-1 3 3v4l-6 2-3-3z', '#fff'),
  extr: p('M0 18l3-5h17l-3 5z', '#5b7cf0', '#23388c') + p('M4 14v-11M10 14v-11M16 14v-11M2 5l2-3 2 3M8 5l2-3 2 3M14 5l2-3 2 3', 'none', '#fff', 1.5),
  array: [1, 8, 15].map((y, j) => [1, 8, 15].map((x, i) => r(x, y, 4, 4, i || j < 2 ? '#a5b4ff' : '#fff', '#000', 1.2)).join('')).join(''),
  align: r(6, 1, 8, 4, '#fff') + r(7, 8, 6, 4, '#fff') + r(6, 14, 8, 5, '#fff') + p('M10 0v20', 'none', '#e00', 1.5),
  book: p('M1 5l4-3 4 2v13l-5 2-3-3z', '#f3f3f3') + p('M12 1l7 3-6 15-6-3z', 'url(#blue)'),
  tick: p('M1 11l4 6c3-7 7-11 13-15-6 5-9 10-12 16z', '#000', '#000'),
  solids: p('M1 6l5-3 7 1v9l-5 3-7-3z', 'url(#gray)') + p('M14 4l5 13c-2 3-8 3-9 0z', 'url(#gray)'),
  pyr: p('M2 16l8-8 8 6-7 5z', 'url(#gold)', '#6f4300') + p('M10 8l1 11', 'none', '#6f4300') + p('M8 5l5-4h7v4h-5l-3 2z', '#ccc', '#333', .8),
  // layer panel
  monitor: r(1, 1, 18, 13, '#555') + r(3, 3, 14, 9, '#8b9299', 'none') + p('M6 18h8M10 14v4', 'none', '#111', 2),
  helpbook: r(0, 0, 20, 19, '#dfe6fb', '#33b') + p('M0 0h20v4h-20z', '#2b47c9', 'none') + c(10, 12, 6.5, '#3557da', 'none') + p('M8 10c0-3 5-3 5 0 0 2-2.500 2-2.500 4M10.500 15.500v1.500', 'none', '#fff', 1.5),
  del: p('M1 2l3-1 6 6 6-6 3 2-6 7 6 7-2 2-7-6-6 7-3-2 6-8z', '#333', 'none'),
  tup: p('M1 14l9-9 9 9z', '#888', '#222'), tdn: p('M1 6h18l-9 9z', '#888', '#222'), tlf: p('M14 1v18l-9-9z', '#999', '#777'),
  filter: p('M2 1h16v3l-6 7v8l-4-2v-6l-6-7z', '#777', '#333'), grid: r(3, 2, 14, 16, '#ddd', '#666') + p('M6 7h8v8h-8zM10 7v8M6 11h8', 'none', '#888'),
  hammer: p('M2 19l10-12', 'none', '#333', 3) + p('M5 2l8-1 6 6-2 3-5-4-5-1z', '#777', '#222', 1), qm: c(10, 10, 9, '#555', '#333') + p('M7 8c0-4 6.500-4 6.500 0 0 2.500-3.500 2.500-3.500 5M10 14.500v2', 'none', '#fff', 2),
  trayup: p('M6 13l4-5 4 5z', '#fff', '#555', .8), flag: p('M3 18v-16', 'none', '#444', 3) + p('M4 3c5 0 5 2 7 2 2 0 4 0 6-1-2 6-5 7-7 6-2-1-4-1-6-1z', '#fff', '#444', 1.2) + p('M3 17.500v-15', 'none', '#fff', 1.4),
  net: r(6, 5, 12, 10, '#999', '#333', 3) + r(6, 5, 12, 10, '#888', '#fff', 1.5) + p('M9 18h8', 'none', '#fff', 2) + p('M2 2v4h5v-4M4.500 6v10h4', 'none', '#333', 3) + p('M2 2v4h5v-4M4.500 6v10h4', 'none', '#fff', 1.5), vol: p('M4 7h3l6-5v16l-6-5h-3z', '#fff', '#444'),
  orbi: c(10, 10, 9.7, 'url(#orb)', '#25506f', .5) + p('M5 6c2-1.500 3-1.500 4.500-.5l-1 4c-1.500-1-3-.8-4.500 0z', '#f0642c', 'none') + p('M10.300 6c1.500 1 3 1 4.700 0l-1 4c-1.500.8-3 .8-4.600-.2z', '#9bcf4a', 'none') + p('M3.800 10.500c1.500-1 3-1 4.500 0l-1 4c-1.500-1-3-1-4.500 0z', '#4f9be8', 'none') + p('M9.200 10.800c1.500 1 3 1 4.600.2l-1 4c-1.500 1-3 1-4.600 0z', '#fdc83a', 'none'),
  chrome: c(10, 10, 8.2, '#fbd03a', 'none') + p('M10 10L2.900 5.900A8.200 8.200 0 0 1 17.100 5.900z', '#e33b2e', 'none') + p('M10 10L2.900 5.900A8.200 8.200 0 0 0 9 18.200L13 12z', '#3da74b', 'none') + c(10, 10, 4, '#fff', 'none') + c(10, 10, 3.1, '#3c7be0', 'none'),
  rhinotask: '<g transform="translate(1 -0.5) scale(.9 1.05)">' + r(0, 0, 20, 20, '#111', '#000') + p('M2 1c3-1 6-1 9 0l-4 3-1 4 3 1 4 4 5-8 1 6-1 3-5 5-3-1-4-4-4-3z', '#f3f3f3', 'none') + p('M1 12l3 4M3 11l4 6M9 11l3 3', 'none', '#ddd', .8) + p('M4 8l3 1-2 2z', '#c00', 'none') + '</g>',
  explorer: p('M1 4l1-3h6l1 2h9v14h-17z', '#f0d277', '#b28f35', .5) + r(3, 2, 3, 2, '#3a4', 'none') + r(10, 2, 3, 2, '#2ad', 'none') + p('M1 6h18v12h-18z', '#f9e6a0', '#c5a552', .5) + p('M4 19v-7h12v7h-3v-4h-6v4z', '#9bd5f3', '#4f9ec8', .5),
  team: p('M2 2l14-1 2 2v14l-2 2-14-2z', '#1785e8', '#0a5ab4', .6) + c(9.5, 10, 6, '#fff', 'none') + p('M4.500 10l3-2.500v1.500h4v-1.500l3 2.500-3 2.500v-1.500h-4v1.500z', '#1070d0', 'none'),
  pdf: p('M5 2h9l4 4v13h-13z', '#fafafa', '#aaa', .5) + p('M14 2v4h4', '#ddd', '#aaa', .5) + r(0, 1.5, 12, 6.5, '#b5121b', 'none') + '<text x="1.500" y="6.600" class="pdf">PDF</text>' + p('M8 17c3-2 4-6 3.500-8 0 4 3 6 6 5.500-4-.5-7 .5-9.500 2.500z', 'none', '#c21a1a', 1),
  note: p('M5 2l12 1v14l-2 2z', '#c9b583', '#8d7a4c', .5) + p('M6 2l10 1-3 15-11-3z', 'url(#note)', '#6798a8', .5) + p('M6 2.500l10 1', 'none', '#667', 1.5).replace('/>', ' stroke-dasharray=".8 .8"/>'),
};
const ic = n => S(I[n]);
const $ = id => document.getElementById(id);
const fit = (t, w) => `<span class="fit" data-w="${w}">${t}</span>`;
document.querySelectorAll('[data-icon]').forEach(e => e.innerHTML = ic(e.dataset.icon));

// Cells run from their own start to the start of the next one.
function strip(id, x0, end, items) {
  let h = `<span style="width:${items[0][0] - x0}px;flex:none"></span>`;
  items.forEach((a, i) => { const n = i + 1 < items.length ? items[i + 1][0] : end; h += `<span class="cell ${a[2] || ''}" style="width:${n - a[0]}px">${a[1]}</span>`; });
  $(id).innerHTML = h;
}
strip('menu', 0, 700, [[7, 'File', 18], [39, 'Edit', 20], [73, 'View', 25], [112, 'Curve', 31], [157, 'Surface', 40], [210, 'Solid', 26], [250, 'Mesh', 29], [293, 'Dimension', 57], [364, 'Transform', 55], [433, 'Tools', 29], [476, 'Analyze', 41], [531, 'Render', 37], [582, 'Panels', 34], [630, 'Help', 25]].map(a => [a[0], fit(a[1], a[2])]));
$('log').innerHTML = [['Loading Rhino Render, version 1.50, Mar  4 2014, 21:48:20', 322], ['Cannot find script file C:\\Users\\assistenz\\AppData\\Local\\Temp\\Temp1_scalecenters.zip\\ScaleCenters.rvb', 576], ['Command: Grasshopper', 138], ['1 surface added to selection.', 158], ['Command: Grasshopper', 138], ['Autosaving file as C:\\Users\\assistenz\\AppData\\Roaming\\McNeel\\Rhinoceros\\5.0\\AutoSave\\Room_v14_RhinoAutosave(1420).3dm', 710], ['Autosave completed successfully', 182]].map(a => `<div>${fit(...a)}</div>`).join('');

const tabs = [[8, 'Standard', 16, 44], [70, 'CPlanes', 77, 41], [127, 'Set View', 136, 43], [187, 'Display', 196, 38], [241, 'Select', 250, 31], [289, 'Viewport Layout', 298, 79], [384, 'Visibility', 391, 43], [440, 'Transform', 448, 51], [506, 'Curve Tools', 514, 60], [582, 'Surface Tools', 590, 68], [666, 'Solid Tools', 674, 55], [737, 'Mesh Tools', 746, 57], [811, 'Render Tools', 820, 66], [896, 'Drafting', 904, 39], [952, 'New in V5', 960, 50], [1020]];
$('tabs').innerHTML = tabs.slice(0, -1).map((t, i) => { const w = tabs[i + 1][0] - t[0]; return `<div class="tab" style="width:${w}px;padding-left:${t[2] - t[0]}px"><svg width="${w}" height="17">${p(`M0 15.500L7 1.500q1-1 2-1h${w - 12}q3 0 3 3v12`, i ? '#d6daea' : '#fff', '#a7adbd')}${i ? '' : p(`M1 16h${w - 1}`, 'none', '#fff', 2)}</svg>${fit(t[1], t[3])}</div>`; }).join('');
const bar = 'neu open save* print props cut copy paste undo* pan rotate zoom zoomw zoome zooms unview* four* car* cplane* circ* snap* bulb* lock* layers* wheel* sphere render* blueball* spot* gears* dims* help*'.split(' ');
const tool = n => { const k = n.replace('*', ''); return `<span class="tool${k !== n ? ' fly' : ''}">${ic(k)}</span>`; };
$('toolbar').innerHTML = bar.map(tool).join('');
$('palette').innerHTML = 'arrow point* poly* curve* circle* ell* arc* rect* hex* fillet* srf* bend* cube* balls* cyl* mesh* puzzle burst trim split group* ungroup ctrl ctrl2* text move* scatter orient bool* extr* array* align* book* tick* solids* pyr*'.split(' ').map(tool).join('');
strip('diva', 7, 340, [[10, ic('globe')], [37, fit('Location', 42)], [91, ic('nodes')], [119, fit('Nodes', 31)], [164, ic('mats')], [191, fit('Materials', 45), 'fly'], [248, ic('metrics')], [274, fit('Metrics', 36)]]);
strip('links', 7, 300, [[9, fit('Assign Materials', 82)], [96, fit('Shading Controls', 84)], [187, fit('Lighting Controls', 83)]]);

// Layer panel
$('ptabs').innerHTML = [['wheel', 'Properties', 50, 80], ['layers', 'Layers', 33, 67], ['monitor', 'Display', 37, 67], ['helpbook', 'Help', 23, 64]].map((t, i) => `<div class="ptab" style="width:${t[3]}px"><svg width="${t[3]}" height="22">${p(`M.5 21.500v-18q0-3 3-3h${t[3] - 14}L${t[3] - 2} 10l8 11.500z`, i === 1 ? '#fff' : '#d6daea', '#a7adbd')}</svg><span class="pic">${ic(t[0])}</span>${fit(t[1], t[2])}</div>`).join('');
$('ptools').innerHTML = 'neu copy del tup tdn tlf filter grid hammer qm'.split(' ').map(n => `<span>${ic(n)}</span>`).join('');
const bulb = k => S(p('M6.500 11c0-2-3-3-3-6a5 4.500 0 0 1 9 0c0 3-3 4-3 6z', k ? '#fdf29a' : '#3f97e3', k ? '#6d6a2a' : '#1c5d9d', .8) + (k ? p('M6.500 11c0-2-3-3-3-6a5 4.500 0 0 1 4.500-4.300v10.300z', '#3f97e3', '#1c5d9d', .6) : '') + r(6.5, 11.5, 3, 3, '#fff', '#222', .9), '1 -.5 17 17');
const lockIcon = s => S(r(3.5, 8.5, 8, 6, s ? '#eee' : '#fff') + p('M9.500 8v-3.500q0-2 2.200-2t2.200 2v1.500', 'none', '#000', 1.2), '.5 0 17 17');
const L = [[0, 'Default', 39, '#000'], [1, 'Building', 36, '#000'], [2, 'ceiling', 29, '#fff'], [2, 'floor', 20, '#3dbb7b'], [2, 'glazing', 32, '#21e3ea'], [2, 'ground', 32, '#bdbdbd'], [2, 'walls', 22, '#fff'], [1, 'DIVA Thermal', 65, '#000'], [2, 'ep_adiabatic', 60, '#f00'], [2, 'ep_ceiling', 47, '#8e8e8e'], [2, 'ep_floor', 38, '#fff'], [2, 'ep_wall', 35, '#c6c6c6'], [2, 'ep_window', 53, '#3dbdbd'], [1, 'DIVA Analysis Surfaces', 110, '#00aecb'], [2, 'Analysis Grid', 59, '#fff'], [2, 'Node Values', 60, '#bdbdbd'], [2, 'Nodes', 30, '#000'], [2, 'Radiance Legend', 84, '#000'], [2, 'Node Surfaces', 70, '#ffae00']];
$('layers').innerHTML = L.map((a, i) => `<div class="cols layer${i === 1 ? ' sel' : ''}${i ? '' : ' bold'}"><span class="name"${a[0] === 1 ? '' : ` style="padding-left:${a[0] ? 35 : 22}px"`}>${a[0] === 1 ? '<i class="exp"></i>' : ''}${fit(a[1], a[2])}</span><span>${i ? '' : S(p('M17 8l3 4c2-4 3-5 5-7-2 1-4 3-5 5l-2-2z', '#000', '#000'), '0 0 17 17')}</span><span>${i ? bulb(a[0] === 2) : ''}</span><span>${i ? lockIcon(i === 1) : ''}</span><span><i class="sw" style="background:${a[3]}"></i></span><span><i class="mat"></i></span><span class="ltype">${fit('Continuous', i ? 53 : 63)}</span><span>${S(p('M8.500 2.500l5.800 6-5.800 6-5.800-6z', a[3], i === 1 ? '#fff' : '#000', .9), '0 0 17 17')}</span></div>`).join('');

// Viewport tabs
const vt = [[64, 'Perspective', 75, 60, 142], [142, 'Top', 153, 20, 180], [180, 'Front', 191, 28, 226], [226, 'Right', 237, 28, 272], [272, '', 290, 0, 303]];
$('vtabs').innerHTML = vt.map((t, i) => { const x = t[0], w = t[4] - x; const f = i === 1 ? '#fff' : i === 4 ? '#dfe2eb' : '#d6daea'; const d = i === 1 ? `M-9 .5L4 17q1 2 3 2h${w - 10}q3 0 3-3v-15.500z` : `M.5 .5l0 3L7 17q1 2 3 2h${w - 13}q3 0 3-3v-15.500z`; return `<div class="tab" style="width:${w}px;padding-left:${t[2] - x}px"><svg width="${w}" height="20">${p(d, f, '#a7adbd')}${i === 4 ? p('M16.500 5.500h2v3.500h3.500v2h-3.500v3.500h-2v-3.500h-3.500v-2h3.500z', '#fff', '#555') : ''}</svg>${t[1] ? fit(t[1], t[3]) : ''}</div>`; }).join('');
const os = [[12, 1, 29, 'End', 18], [56, 0, 73, 'Near', 23], [104, 1, 121, 'Point', 24], [153, 0, 170, 'Mid', 17], [194, 0, 211, 'Cen', 19], [238, 0, 256, 'Int', 12], [276, 1, 293, 'Perp', 21], [322, 0, 341, 'Tan', 18], [367, 0, 384, 'Quad', 25], [417, 0, 435, 'Knot', 21], [465, 0, 482, 'Vertex', 30], [519, 2, 537, 'Project', 32], [577, 2, 595, 'Disable', 35]];
strip('osnap', 7, 640, os.flatMap(o => [[o[0] - 1, `<i class="check${o[1] === 2 ? ' btn' : ''}">${o[1] === 1 ? S(p('M4 9l4 6 7-12', 'none', '#3a4fa0', 3)) : ''}</i>`], [o[2], fit(o[3], o[4])]]));
const st = [[160, 7, 'y -59.17', 43], [232, 29, 'z 0.00', 32], [320, 15, 'Millimeters', 59], [408, 0, 'Default', 39], [581, 11, 'Grid Snap', 55, 1], [657, 8, 'Ortho', 32, 1], [704, 9, 'Planar', 37, 1], [758, 9, 'Osnap', 37, 1], [812, 11, 'SmartTrack', 65, 1], [897, 10, 'Gumball', 46], [963, 15, 'Record History', 81], [1072, 10, 'Filter', 27], [1117, 4, 'Absolute tolerance: 0.01', 131], [2552, 0, '', 0]];
strip('status', 0, 2560, st.map((s, i) => [s[0], (i === 3 ? '<i class="swatch"></i>' : `<i style="width:${Math.max(0, s[1] - 1)}px"></i>`) + (s[2] ? fit(s[2], s[3]) : ''), s[4] ? 'on' : '']));
$('tasks').innerHTML = ['orbi', 'chrome', 'rhinotask', 'explorer', 'team', 'pdf', 'note'].map((n, i) => `<span class="task${i < 2 ? ' plain' : ''}">${ic(n)}</span>`).join('');

// Scenes
const pg = (pts, f) => `<polygon points="${pts}" fill="${f}"/>`;
const bil = (q, u, v) => [0, 1].map(k => (q[k] * (1 - u) + q[k + 2] * u) * (1 - v) + (q[k + 6] * (1 - u) + q[k + 4] * u) * v).join();
const cellq = (q, u0, v0, u1, v1, f) => pg([bil(q, u0, v0), bil(q, u1, v0), bil(q, u1, v1), bil(q, u0, v1)].join(' '), f);
function tile(q, kind, plain, wide) {
  const red = kind === 'r';
  let h = pg(q.join(), red ? '#eb2500' : '#f9da3d');
  if (plain) return h;
  const us = wide ? [0, .34, red ? .69 : 1] : [0, .25, .5, .75, 1];
  const vs = red ? [.255, .5, .75, 1] : kind === 'y' ? [.33, .67, 1] : [.27, .55, .83, 1];
  const cols = red ? [['#eb5500', '#eb3c00', '#ea2c00', '#eb2500'], ['#eb5c00', '#eb3e00', '#ea2c00', '#eb2500'], ['#eb6200', '#eb4000', '#ea2d00', '#ea2a00']]
    : kind === 'y' ? [['#f3ed62', '#f7e955', '#fbe44c', '#fde145'], ['#e9e978', '#f5ec5a', '#f8e84e', '#f8e84e']]
    : [['#f6e955', '#fbe44c', '#fde145', '#fde145'], ['#f3ed62', '#f6ea55', '#fbe44c', '#fde448'], ['#e9e978', '#f5ec5a', '#f8e84e', '#f8e84e']];
  for (let j = 0; j < vs.length - 1; j++) for (let i = 0; i < us.length - 1; i++) h += cellq(q, us[i], vs[j], us[i + 1], vs[j + 1], cols[j][wide && !red && i ? 2 : i]);
  return h;
}
const axes = (x, y, a, b) => `<path d="M${x} ${y - 30}V${y}H${x + 30}" fill="none" stroke="#7f8489" stroke-width="2"/><text class="ax" x="${x + 1}" y="${y - 28}">${a}</text><text class="ax" x="${x + 32}" y="${y + 2}">${b}</text>`;
const ramp = ['#eb2500', '#eb4700', '#e96e00', '#f09010', '#f6c733', '#f9e956', '#dfe28f', '#b8ced8', '#9db9ec', '#6e90c6', '#4a6aa9'];

let t = `<g transform="translate(0 300) scale(.35714 .33806)">` + r(301, 341, 797, 855, '#4a6aa9', 'none') + pg('301,638 1098,511 1098,938 301,1066', '#eb2500') + pg('566,703 832,660 832,980 566,1023', '#eb3d00')
  + pg('301,745 566,703 566,812 301,852', '#ea5500') + pg('301,851 566,810 566,917 301,959', '#ea5b00') + pg('301,958 566,915 566,1023 301,1066', '#ea6000')
  + ramp.map((k, i) => r(1180, 256 + i * 85.5, 80, 86, k, 'none')).join('') + '</g>';
t += ['kWh/m2', '19.77&lt;=', '17.84', '15.92', '14.00', '12.07', '10.15', '8.23', '6.30', '4.38', '2.46', '&lt;=0.53'].map((s, i) => `<text class="lg" x="450.5" y="${386 + i * 28.93}" textLength="${[65, 64, 42, 42, 42, 42, 42, 32, 32, 32, 32, 55][i]}">${s}</text>`).join('');
$('top').innerHTML = t + axes(101, 783, 'y', 'x');

t = '';
for (let i = 0; i < 9; i++) for (let j = 0; j < 2; j++) {
  const x = 1513.3 + i * 35.75, y = 589.5 + j * 35.7, z = 734 + j * 35.4;
  t += tile([x, y, x + 28, y + 2.3, x + 28, y + 27, x, y + 24.7], 'r', !i, i === 8) + tile([x, z, x + 28, z + 3, x + 28, z + 24, x, z + 20.5], j ? 'f' : 'y', !i, i > 6);
}
const origin = (x, y, s) => r(x, y, s, s, '#80848b', '#8c9097') + `<path d="M${x + s / 2} ${y + 1}v${s / 2 - 1}" stroke="#3f9a45" stroke-width="1.500"/><path d="M${x + s / 2} ${y + s / 2}h${s / 2}" stroke="#9c4a50" stroke-width="1.500"/>`;
$('front').innerHTML = t + origin(1656, 678, 29) + p('M1513 793.500h15M1833 793.500h7', 'none', '#8f4a52') + axes(1122, 783, 'z', 'x');

const rt = (y) => pg(`1599.3,${y} 1605,${y + 2.7} 1583.3,${y + 40.7} 1577.7,${y + 37.4}`, '#eb2500') + pg(`1594.3,${y + 9} 1597.5,${y + 10.5} 1580.7,${y + 39} 1577.7,${y + 37.4}`, '#ea5c00');
const yt = (y) => pg(`1604.3,${y} 1609.3,${y + 5} 1578.3,${y + 36} 1573.3,${y + 31}`, '#fbe145') + pg(`1604.3,${y} 1609.3,${y + 5} 1599.5,${y + 15} 1594.5,${y + 10}`, '#f9d93c') + pg(`1594.5,${y + 10} 1597,${y + 12.5} 1576,${y + 33.5} 1573.3,${y + 31}`, '#f3ec62');
$('right').innerHTML = rt(909.3) + rt(963.3) + origin(1602.7, 1043.3, 44) + r(1570.5, 1033.5, 43, 7.5, '#4a6aa9', '#6c80ab', .6) + r(1570.5, 1087.5, 43, 7.5, '#4a6aa9', '#6c80ab', .6) + yt(1128) + yt(1182) + '<path d="M1561 1217.500h60" stroke="#85666c" stroke-dasharray="3 2"/>' + axes(1122, 1293, 'z', 'y');

const A = [[130, 25, 296, 25, 314, 262, 152, 265], [325, 34, 490, 36, 504, 272, 343, 275], [524, 45, 688, 46, 695, 283, 538, 286], [723, 55, 885, 57, 888, 294, 731, 297], [924, 66, 1084, 67, 1082, 305, 927, 308], [1127, 77, 1286, 78, 1277, 317, 1122, 319], [1330, 87, 1488, 89, 1473, 328, 1320, 330]];
const B = [[30, 240, 170, 240, 192, 456, 45, 456], [200, 250, 356, 252, 368, 466, 220, 468], [384, 260, 537, 262, 547, 477, 398, 479], [567, 270, 718, 272, 725, 488, 578, 490], [752, 281, 903, 283, 905, 498, 760, 501], [938, 291, 1087, 292, 1085, 509, 941, 511], [1127, 302, 1275, 303, 1266, 519, 1123, 521], [1316, 313, 1460, 315, 1448, 531, 1306, 533]];
const blue = ['100,450 192,457 264,471 225,614 225,640 182,618 100,600', '285,465 350,465 428,482 395,628 395,640 338,626 249,605', '451,475 540,478 592,491 565,641 495,632 421,615', '618,486 700,489 758,502 738,655 652,642 596,627', '787,500 870,500 924,512 910,668 910,690 810,647 769,638', '956,513 1045,511 1092,522 1085,681 946,648', '1127,520 1215,520 1261,532 1258,690 1122,660', '1298,510 1390,532 1431,542 1436,701 1298,670', '100,616 160,627 127,742 100,742', '182,618 315,635 278,787 143,758', '338,626 468,645 438,798 304,769', '495,632 625,656 599,808 466,780', '652,642 780,664 760,818 629,790', '810,647 937,675 922,829 792,802', '969,656 1095,684 1087,839 956,811', '1128,666 1252,694 1250,850 1122,822', '1288,675 1411,705 1416,861 1287,832'];
const E = [[218, 753, 345, 753, 345, 935, 220, 935], [368, 763, 493, 763, 493, 945, 368, 945], [517, 773, 642, 773, 642, 954, 517, 954], [668, 783, 792, 783, 793, 965, 667, 965], [819, 793, 943, 793, 942, 975, 818, 975], [971, 803, 1095, 803, 1092, 985, 970, 985], [1125, 812, 1248, 812, 1242, 996, 1122, 996], [1280, 821, 1400, 821, 1395, 1006, 1275, 1006]];
const F = [[266, 888, 386, 888, 387, 1060, 268, 1060], [409, 898, 527, 898, 527, 1070, 410, 1070], [550, 907, 668, 907, 667, 1079, 551, 1079], [692, 917, 810, 917, 808, 1089, 692, 1089], [836, 927, 953, 927, 951, 1099, 835, 1099], [979, 937, 1097, 937, 1093, 1109, 978, 1109], [1125, 945, 1241, 945, 1236, 1118, 1122, 1118], [1274, 953, 1390, 953, 1379, 1128, 1266, 1128]];
t = '<g transform="translate(0 820) scale(.5102 .33333)">' + pg('724,463 757,463 780,503 765,616 742,616', '#84888e') + pg('753,538 774,538 774,542 753,542', '#a8323a');
t += pg('100,744 197,744 197,880 100,880', '#f9da3d') + pg('100,878 246,878 248,1050 129,1050', '#f9da3d');
F.forEach((q, i) => t += tile(q, 'f', 0, i > 5)); E.forEach((q, i) => t += tile(q, 'y', 0, i > 5));
blue.forEach(q => t += pg(q, '#4a6aa9'));
B.forEach((q, i) => t += tile(q, 'r', !i)); A.forEach((q, i) => t += tile(q, 'r', 0, i === 6));
ramp.forEach((k, i) => t += r(1391, 1000 + i * 14.4, 10, 14.6, k, 'none'));
t += '<g fill="#a8101c">' + [25, 25, 14, 16, 16, 15, 15, 15, 15, 14, 14, 24].map((w, i) => `<path d="M1401 ${992 + i * 14.7}h${w}v6h-${w - 2}z"/>`).join('') + '</g></g>';
t += '<path d="M65 1181h14M65 1183h21M65 1185h17M66 1187h22M76 1188h18" fill="none" stroke="#b01420" stroke-width="1.300" stroke-dasharray="5 .7"/>';
$('persp').innerHTML = t + `<path d="M102.500 1270L101.500 1293l30 1.500" fill="none" stroke="#666b70" stroke-width="1.300"/><text class="ax" x="103" y="1267">y</text><text class="ax" x="103" y="1278">z</text><text class="ax" x="134" y="1296">x</text>`;

document.querySelectorAll('.fit').forEach(e => { const m = document.createRange(); m.selectNodeContents(e); const w = m.getBoundingClientRect().width; e.style.letterSpacing = ((+e.dataset.w - w) / e.textContent.length).toFixed(3) + 'px'; });
```
